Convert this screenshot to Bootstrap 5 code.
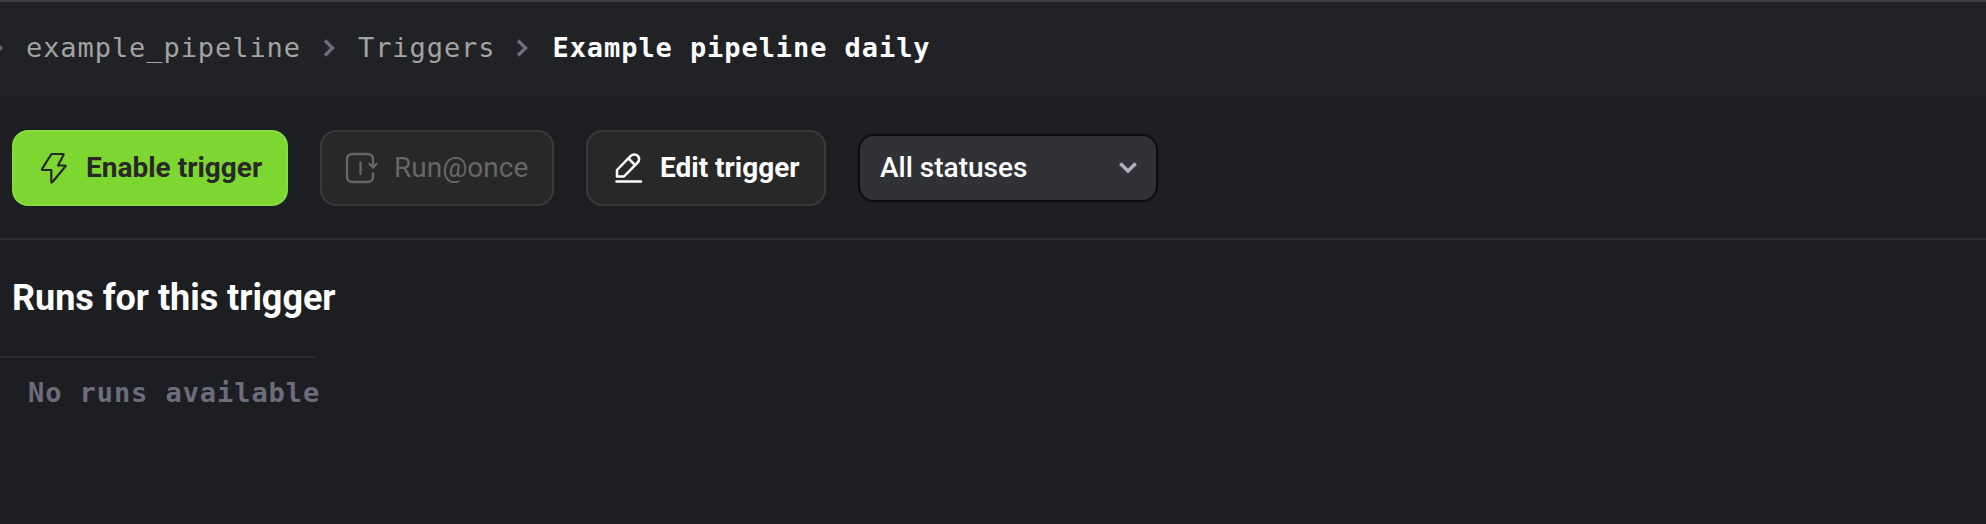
<!DOCTYPE html>
<html lang="en">
<head>
<meta charset="utf-8">
<meta name="viewport" content="width=device-width, initial-scale=1">
<title>Example pipeline daily</title>
<link href="https://cdn.jsdelivr.net/npm/bootstrap@5.3.0/dist/css/bootstrap.min.css" rel="stylesheet">
<style>
  body { background: #1d1e21; color: #fff; font-family: Roboto, sans-serif; font-size: 28px; line-height: 36px; height: 524px; overflow: hidden; }
  .code-text { font-family: "DejaVu Sans Mono", monospace; font-size: 27px; letter-spacing: .93px; }
  .topbar { height: 98px; padding-bottom: 2px; background: #212226; border-top: 2px solid #3d3f3f; border-bottom: 2px solid #1b1c1d; }
  .crumb { color: #a3a3a3; text-decoration: none; }
  .crumb-pipeline { margin: 0 22px 0 23px; }
  .crumb-section { margin: 0 21px 0 23px; }
  .crumb-current { margin-left: 24px; }
  .chev { color: #6c6c7a; width: 12px; height: 18px; flex: none; }
  .chev-first { margin-left: -9px; }
  .toolbar { height: 142px; padding: 32px 12px; gap: 32px; border-bottom: 2px solid #2a2b2f; }
  .tool { height: 76px; border: 2px solid #3a3a3b; border-radius: 16px; background: #282828; color: #fff; font-size: 28px; line-height: 36px; font-weight: 700; padding: 0; flex: none; }
  .tool svg { flex: none; }
  .tool-enable { width: 276px; gap: 18px; background: #7dd730; border-color: #86dc40; color: #282828; padding-left: 26px; }
  .tool-run, .tool-run:disabled { width: 234px; gap: 15px; background: #282828; border-color: #3a3a3b; color: #676767; opacity: 1; font-weight: 400; padding-left: 23px; }
  .tool-edit { width: 240px; gap: 16px; padding-left: 26px; }
  .status-select { width: 300px; height: 68px; flex: none; border: 2px solid #0b0b0c; border-radius: 16px; background: #313237; font-weight: 500; padding: 0 19px 0 20px; }
  .runs-title { font-size: 36px; line-height: 44px; font-weight: 700; padding: 36px 12px; letter-spacing: -.03px; }
  .runs-rule { width: 316px; height: 2px; background: #2a2b2f; }
  .runs-empty { color: #6c6c7a; padding: 17px 28px; }
</style>
</head>
<body>
<header class="topbar d-flex align-items-center text-nowrap code-text">
  <svg class="chev chev-first" viewBox="0 0 12 18" fill="none" stroke="currentColor" stroke-width="3.4"><path d="M2 1.500 9.500 9 2 16.500"/></svg>
  <a href="#" class="crumb crumb-pipeline">example_pipeline</a>
  <svg class="chev" viewBox="0 0 12 18" fill="none" stroke="currentColor" stroke-width="3.4"><path d="M2 1.500 9.500 9 2 16.500"/></svg>
  <a href="#" class="crumb crumb-section">Triggers</a>
  <svg class="chev" viewBox="0 0 12 18" fill="none" stroke="currentColor" stroke-width="3.4"><path d="M2 1.500 9.500 9 2 16.500"/></svg>
  <span class="fw-bold crumb-current">Example pipeline daily</span>
</header>
<div class="toolbar d-flex align-items-center text-nowrap">
  <button type="button" class="btn tool tool-enable d-flex align-items-center">
    <svg width="28" height="32" viewBox="0 0 28 32" fill="none" stroke="currentColor" stroke-width="2.2" stroke-linejoin="round"><path d="M12.500 2H23Q24 2 23.500 3L18 13.500H25Q26 13.500 25.300 14.500L12.500 30Q11.300 31 11.300 29.700V18H3Q1.500 18 2.300 16.700L10.800 3Q11.500 2 12.500 2Z"/></svg>
    <span>Enable trigger</span>
  </button>
  <button type="button" class="btn tool tool-run d-flex align-items-center" disabled>
    <svg width="34" height="32" viewBox="0 0 34 32" fill="none" stroke="currentColor" stroke-width="2.300" stroke-linecap="round"><path d="M28 13V7.500Q28 2 22.500 2H7.500Q2 2 2 7.500V24.500Q2 30 7.500 30H22.500Q28 30 28 24.500V21.500M24.500 12 28 15.500 31.500 12M15.500 10.500V22"/></svg>
    <span>Run@once</span>
  </button>
  <button type="button" class="btn tool tool-edit d-flex align-items-center">
    <svg width="30" height="32" viewBox="0 0 30 32" fill="none" stroke="currentColor" stroke-width="2.500" stroke-linejoin="round" stroke-linecap="round"><path d="M3 24.500V18L16.500 4.200C19 1.700 22 2 23.700 3.800C25.500 5.700 25.700 8.500 23.200 11L10 24.500ZM14.500 6.500 21 13M2.500 29.500H27"/></svg>
    <span>Edit trigger</span>
  </button>
  <div class="status-select d-flex align-items-center justify-content-between" role="button">
    <span>All statuses</span>
    <svg width="18" height="12" viewBox="0 0 18 12" fill="none" stroke="#aeb1bd" stroke-width="3.600"><path d="M1.300 1.500 9 9 16.700 1.500"/></svg>
  </div>
</div>
<main>
  <h1 class="runs-title m-0 text-nowrap">Runs for this trigger</h1>
  <div class="runs-rule"></div>
  <div class="runs-empty code-text fw-bold text-nowrap">No runs available</div>
</main>
<script src="https://cdn.jsdelivr.net/npm/bootstrap@5.3.0/dist/js/bootstrap.bundle.min.js"></script>
</body>
</html>
